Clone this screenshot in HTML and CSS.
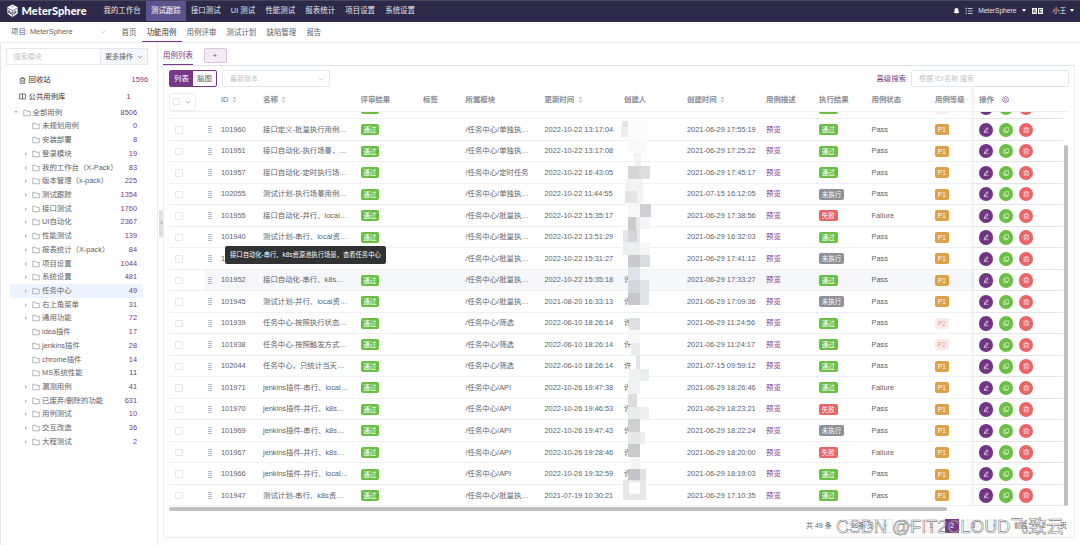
FILE: index.html
```
<!DOCTYPE html>
<html>
<head>
	<meta charset="utf-8">
	<title>MeterSphere</title>
	<link rel="stylesheet" href="styles.css">
</head>
<body>
	<svg class="sprite">
		<symbol id="i-folder" viewBox="0 0 16 16"><path d="M1.5 13.5v-11h5l1.5 2h6.500v9z" fill="none" stroke="currentColor" stroke-width="1.3"/></symbol>
		<symbol id="i-down" viewBox="0 0 16 16"><path d="M2 5l6 6 6-6" fill="none" stroke="currentColor" stroke-width="1.7"/></symbol>
		<symbol id="i-sort" viewBox="0 0 10 16"><path d="M5 1l4.500 5h-9zM5 15l4.500-5h-9z" fill="currentColor"/></symbol>
		<symbol id="i-edit" viewBox="0 0 16 16"><path d="M4 9.500l5.500-7.500 3 2.200-5.500 7.500-3.400 1zM2 14.500h12" fill="none" stroke="currentColor" stroke-width="1.6"/></symbol>
		<symbol id="i-copy" viewBox="0 0 16 16"><path d="M5 2h9v9h-9zM5 5h-3v9h9v-3" fill="none" stroke="currentColor" stroke-width="1.3"/></symbol>
		<symbol id="i-trash" viewBox="0 0 16 16"><path d="M1.500 4h13M5.500 4v-2.500h5v2.500M3 4v10.500h10v-10.500M6.500 7v5M9.500 7v5" fill="none" stroke="currentColor" stroke-width="1.4"/></symbol>
		<symbol id="i-book" viewBox="0 0 16 16"><path d="M8 3v10.500M1 2.500h14v11h-14z" fill="none" stroke="currentColor" stroke-width="1.5"/></symbol>
		<symbol id="i-gear" viewBox="0 0 16 16"><path d="M8 1l2 1.800 2.800-.3.700 2.700 2 2-1.500 2.300.2 2.700-2.700.8-1.500 2.300-2-1.300-2 1.300-1.500-2.300-2.700-.8.2-2.700-1.500-2.300 2-2 .7-2.700 2.800.3z" fill="none" stroke="currentColor" stroke-width="1.4"/><circle cx="8" cy="8.300" r="2.600" fill="none" stroke="currentColor" stroke-width="1.400"/></symbol>
	</svg>

	<header class="top">
		<div class="logo">
			<svg viewBox="0 0 28 30"><path d="M14 1l11 5.500v14l-11 8-11-8v-14z" fill="#fff"/><path d="M4 9l10 5 10-5M14 14v14" fill="none" stroke="#2d2a49" stroke-width="1.300"/><path d="M6 20v-6l5 8v-5M17 22v-4l4-3v4l-4 3" fill="none" stroke="#2d2a49" stroke-width="1.800"/><path d="M11 5l3-2 4 3-4 2z" fill="#b9b7c9"/></svg>
			<span>MeterSphere</span>
		</div>
		<nav class="menu">
			<a>我的工作台</a><a class="on">测试跟踪</a><a>接口测试</a><a>UI 测试</a><a>性能测试</a><a>报表统计</a><a>项目设置</a><a>系统设置</a>
		</nav>
		<div class="user">
			<svg class="bell" viewBox="0 0 16 16"><path d="M8 1c-3 0-4.500 2-4.500 5v3.500l-2.500 3h14l-2.500-3v-3.500c0-3-1.500-5-4.500-5zM6 13.500h4l-2 2z" fill="#fff"/></svg>
			<svg class="tasks" viewBox="0 0 16 16"><path d="M6 3h9M6 8h9M6 13h9M1 3l1.500 1.500 2-3M1 8h3M1 13h3" fill="none" stroke="#fff" stroke-width="1.400"/></svg>
			<span>MeterSphere</span><i class="caret"></i>
			<span class="lang"><b>A</b><b>E</b></span>
			<span>小王</span><i class="caret last"></i>
		</div>
	</header>

	<div class="sub">
		<div class="project"><span>项目: MeterSphere</span><svg><use href="#i-down"/></svg></div>
		<nav class="tabs">
			<a>首页</a><a class="on">功能用例</a><a>用例评审</a><a>测试计划</a><a>缺陷管理</a><a>报告</a>
		</nav>
	</div>

	<div class="main">
		<aside class="side">
			<div class="search"><span>搜索模块</span><b>更多操作<svg><use href="#i-down"/></svg></b></div>
			<div class="entry"><svg><use href="#i-trash"/></svg><span>回收站</span><em>1596</em></div>
			<div class="entry pub"><svg><use href="#i-book"/></svg><span>公共用例库</span><em>1</em></div>
			<div class="tree" id="tree"></div>
			<div class="fold">‹</div>
		</aside>

		<section class="content">
			<div class="views"><span class="view">用例列表</span><span class="add">+</span></div>
			<div class="card">
				<div class="tools">
					<div class="mode"><b>列表</b><span>脑图</span></div>
					<div class="version"><span>最新版本</span><svg><use href="#i-down"/></svg></div>
					<a class="adv">高级搜索</a>
					<div class="query">根据 ID/名称 搜索</div>
				</div>
				<div class="table">
					<div class="row head">
						<div><span class="all"><i class="box"></i><svg><use href="#i-down"/></svg></span></div>
						<div></div>
						<div>ID<svg class="sort"><use href="#i-sort"/></svg></div>
						<div>名称<svg class="sort"><use href="#i-sort"/></svg></div>
						<div>评审结果</div>
						<div>标签</div>
						<div>所属模块</div>
						<div>更新时间<svg class="sort"><use href="#i-sort"/></svg></div>
						<div>创建人</div>
						<div>创建时间<svg class="sort"><use href="#i-sort"/></svg></div>
						<div>用例描述</div>
						<div>执行结果</div>
						<div>用例状态<svg class="filter"><use href="#i-down"/></svg></div>
						<div>用例等级<svg class="filter"><use href="#i-down"/></svg></div>
						<div class="ops">操作<svg class="gear"><use href="#i-gear"/></svg></div>
					</div>
					<div class="body" id="rows"></div>
					<div class="vbar"></div>
					<svg class="mosaic" id="mosaic" viewBox="0 0 40 390"></svg>
					<div class="tip">接口自动化-串行、k8s资源池执行场景，查看任务中心</div>
				</div>
				<div class="hbar"></div>
				<div class="pager">
					<span class="total">共 49 条</span>
					<span class="size">20条/页<svg><use href="#i-down"/></svg></span>
					<span class="pg">‹</span><span class="pg">1</span><span class="pg cur">2</span><span class="pg">3</span><span class="pg">›</span>
					<span class="jump">前往</span><span class="num">2</span><span>页</span>
				</div>
				<div class="mark">CSDN @FIT2CLOUD飞致云</div>
			</div>
		</section>
	</div>
	<script src="app.js"></script>
</body>
</html>
```
FILE: styles.css
```
* {
	box-sizing: border-box;
}
body {
	margin: 0;
	width: 1080px;
	height: 545px;
	overflow: hidden;
	background: #fff;
	color: #606266;
	font-family: "Liberation Sans", "Noto Sans CJK SC", sans-serif;
	font-size: 7.4px;
	line-height: 12px;
	white-space: nowrap;
}
svg {
	width: 8px;
	height: 8px;
	flex: none;
}
i, em {
	font-style: normal;
}
.sprite {
	display: none;
}

/* header */
.top {
	display: flex;
	align-items: center;
	height: 21.500px;
	padding-bottom: 1px;
	background: #2d2a49;
	border-top: 1px solid #47455c;
	color: #e6e6ec;
}
.logo {
	display: flex;
	align-items: center;
	width: 98.500px;
	padding-left: 6px;
	color: #fff;
	font: 900 11px/18px Lato, sans-serif;
	letter-spacing: .05px;
}
.logo svg {
	width: 13px;
	height: 14px;
	margin-right: 2.500px;
}
.menu {
	display: flex;
	flex: 1;
	font-size: 7.450px;
}
.menu a {
	padding: 0 5.100px;
	line-height: 20px;
}
.menu .on {
	background: #5b5390;
	color: #fff;
}
.user {
	display: flex;
	align-items: center;
	padding-right: 6px;
	font-size: 6.600px;
}
.bell {
	width: 7px;
	height: 8px;
	margin-right: 5px;
}
.tasks {
	margin-right: 5px;
}
.caret {
	border: 2px solid transparent;
	border-top: 3px solid #fff;
	border-bottom: 0;
	margin: 0 6px 0 5.500px;
}
.caret.last {
	margin: 0 0 0 4px;
}
.lang {
	display: flex;
	gap: 1px;
	margin-right: 10px;
}
.lang b {
	width: 5px;
	height: 6px;
	background: #fff;
	color: #2d2a49;
	font-size: 5px;
	line-height: 6px;
	text-align: center;
}

/* second bar */
.sub {
	display: flex;
	height: 21.300px;
	border-bottom: 1px solid #ebedf0;
}
.project {
	display: flex;
	align-items: center;
	justify-content: space-between;
	width: 116.500px;
	padding: 0 11px 0 11px;
}
.project svg, .version svg {
	width: 6px;
	height: 6px;
	color: #b4b8c0;
}
.tabs {
	display: flex;
}
.tabs a {
	padding: 0 5.100px;
	line-height: 21px;
	font-size: 7.450px;
}
.tabs .on {
	border-bottom: 1px solid #783887;
	color: #303133;
}

.main {
	display: flex;
	height: 502px;
}

/* module tree */
.side {
	position: relative;
	width: 158px;
	padding: 5.500px 9px 0 5px;
	border-left: 1px solid #e6e6e6;
	border-right: 1px solid #ececec;
}
.search {
	display: flex;
	height: 16.500px;
	width: 142px;
	margin-bottom: 7px;
	border: 1px solid #e4e7ed;
	line-height: 15px;
	color: #c0c4cc;
	font-size: 7px;
}
.search span {
	flex: 1;
	padding-left: 6.500px;
}
.search b {
	display: flex;
	align-items: center;
	justify-content: space-between;
	width: 47px;
	padding: 0 4px;
	background: #f5f7fa;
	border-left: 1px solid #e4e7ed;
	color: #606266;
	font-weight: normal;
}
.search b svg {
	width: 6px;
	height: 6px;
}
.entry {
	display: flex;
	align-items: center;
	height: 16.500px;
	padding: 0 0 0 13px;
	color: #303133;
}
.entry svg {
	width: 7px;
	height: 7px;
	margin-right: 2.500px;
}
.entry span {
	flex: 1;
}
.entry em {
	width: 30px;
	text-align: right;
	color: #783887;
}
.pub em {
	margin-right: 17.500px;
}
.tree {
	padding-top: 1px;
}
.node {
	display: flex;
	align-items: center;
	height: 13.730px;
	margin-left: 4px;
	width: 133px;
	padding-right: 6px;
}
.node .arr {
	width: 22px;
	padding-left: 14.500px;
}
.node .arr::before {
	content: "";
	display: none;
	width: 0;
	border: 2px solid transparent;
	border-left: 2.500px solid #b4b8c0;
	border-right: 0;
}
.node.has .arr::before {
	display: block;
}
.node svg {
	width: 8px;
	height: 8px;
	margin-right: 2px;
	color: #8b8e95;
}
.node span {
	flex: 1;
}
.node em {
	color: #783887;
}
.node.sel {
	background: #ecf5ff;
}
.node.root .arr {
	width: 12.500px;
	padding-left: 4px;
}
.node.root .arr::before {
	transform: rotate(90deg);
	width: 2px;
}
.fold {
	position: absolute;
	left: 158px;
	top: 167px;
	width: 5px;
	height: 27px;
	border-radius: 0 3px 3px 0;
	background: #dfe1e6;
	color: #909399;
	line-height: 25px;
	text-align: center;
}

/* case list */
.content {
	flex: 1;
	padding: 5px 5px 0 5px;
}
.views {
	display: flex;
	height: 17.500px;
	line-height: 15px;
}
.view {
	border-bottom: 1px solid #783887;
	color: #783887;
	font-size: 7.500px;
}
.add {
	width: 23px;
	height: 15px;
	margin-left: 10.500px;
	border: 1px solid #d9c6de;
	border-radius: 2px;
	background: #f2ebf4;
	color: #783887;
	line-height: 13px;
	text-align: center;
}
.card {
	position: relative;
	height: 472.500px;
	padding: 4px 5px 0 5px;
	border: 1px solid #ebeef5;
	border-top-color: #dfe2e8;
}
.tools {
	display: flex;
	align-items: center;
	height: 17px;
}
.mode {
	display: flex;
	width: 48px;
	height: 17px;
	border: 1px solid #783887;
	border-radius: 2px;
	line-height: 15px;
	text-align: center;
}
.mode b {
	flex: 1;
	background: #783887;
	color: #fff;
	font-weight: normal;
}
.mode span {
	flex: 1;
}
.version {
	display: flex;
	align-items: center;
	justify-content: space-between;
	width: 108px;
	height: 17px;
	margin-left: 5px;
	padding: 0 5px 0 7px;
	border: 1px solid #e4e7ed;
	border-radius: 2px;
	color: #c0c4cc;
	font-size: 7px;
}
.adv {
	margin-left: auto;
	color: #783887;
}
.query {
	width: 158px;
	height: 17px;
	margin-left: 5px;
	padding-left: 7px;
	border: 1px solid #e4e7ed;
	border-radius: 2px;
	color: #c0c4cc;
	font-size: 7px;
	line-height: 15px;
}
.table {
	position: relative;
	height: 419px;
	width: 900px;
}
.row {
	display: grid;
	grid-template-columns: 39px 13px 42px 97.500px 62.500px 42.500px 79px 79.500px 63px 79px 53px 52.500px 63.500px 39px 90px;
	height: 21.530px;
	width: 895px;
	border-bottom: 1px solid #eff1f5;
	align-items: center;
}
.row > div {
	display: flex;
	align-items: center;
	height: 100%;
	padding-top: 1px;
}
.head {
	height: 24.500px;
	width: 900px;
	color: #85888f;
	font-weight: 500;
	-webkit-text-stroke: .15px #85888f;
}
.all {
	display: flex;
	align-items: center;
	justify-content: space-between;
	width: 27px;
	height: 18px;
	margin-top: 4px;
	padding: 0 4px 0 2.500px;
	border: 1px solid #ebeef5;
	border-radius: 3px;
}
.all svg {
	width: 6px;
	height: 6px;
}
.box {
	width: 7.500px;
	height: 7.500px;
	border: 1px solid #e4e7ed;
	border-radius: 1px;
}
.row:not(.head) .box {
	margin-left: 6px;
}
.sort {
	width: 5px;
	height: 7px;
	margin-left: 3.500px;
	color: #b9bdc6;
}
.filter {
	width: 4px;
	height: 4px;
	color: #a5a8af;
}
.gear {
	width: 7px;
	height: 7px;
	margin-left: 8px;
	color: #783887;
}
.body {
	display: flex;
	flex-direction: column;
	justify-content: flex-end;
	height: 394.500px;
	overflow: hidden;
}
.body .row {
	flex: none;
}
.grip {
	width: 4px;
	height: 7px;
	background: repeating-linear-gradient(#b5b8be 0 1px, transparent 1px 2px);
}
.tag {
	height: 11px;
	padding: 0 2.800px;
	border-radius: 2px;
	color: #fff;
	font-size: 6.500px;
	line-height: 11px;
}
.ok { background: #6bbf44; }
.bad { background: #ea6567; }
.none { background: #8d9096; }
.p1 { background: #dfa04a; }
.p2 {
	background: #fdeaea;
	color: #ef9a9a;
}
.link {
	color: #783887;
}
.row .ops {
	gap: 5.700px;
	padding-left: 5px;
	background: #fff;
	box-shadow: -2px 0 3px rgba(0, 0, 0, .07);
}
.head .ops {
	gap: 0;
}
.btn {
	display: flex;
	align-items: center;
	justify-content: center;
	width: 14.300px;
	height: 14.300px;
	border-radius: 50%;
	color: #fff;
}
.btn svg {
	width: 6.500px;
	height: 6.500px;
}
.edit { background: #713583; }
.copy { background: #6bbf44; }
.del { background: #ea6567; }
.row.hover {
	background: linear-gradient(90deg, #fff 36px, #f5f7fa 36px);
}
.vbar {
	position: absolute;
	right: 1px;
	top: 58px;
	width: 4px;
	height: 361px;
	border-radius: 2px;
	background: #c0c0c0;
}
.hbar {
	width: 778px;
	height: 4px;
	border-radius: 2px;
	margin-top: .5px;
	background: #c1c1c3;
}
.mosaic {
	position: absolute;
	left: 451px;
	top: 30px;
	width: 40px;
	height: 390px;
}
.tip {
	position: absolute;
	left: 56px;
	top: 158.500px;
	height: 18px;
	padding: 0 5px;
	border-radius: 2px;
	background: #303133;
	color: #fff;
	font-size: 6.320px;
	line-height: 18px;
}

/* pagination */
.pager {
	display: flex;
	align-items: center;
	gap: 7px;
	height: 14px;
	margin-top: 8px;
	padding: 0 2px 0 637px;
	font-size: 7px;
}
.size {
	display: flex;
	align-items: center;
	justify-content: space-between;
	width: 47px;
	margin-left: 7.500px;
	margin-right: 3px;
	padding: 0 4px;
	border: 1px solid #e8eaee;
	font-size: 6.500px;
}
.size svg {
	width: 5px;
	height: 5px;
}
.pg {
	width: 14px;
	height: 14px;
	background: #f4f4f5;
	line-height: 14px;
	text-align: center;
}
.cur {
	background: #783887;
	color: #fff;
}
.jump {
	margin-left: auto;
}
.num {
	width: 18px;
	border: 1px solid #e8eaee;
	text-align: center;
}
.mark {
	position: absolute;
	left: 672px;
	top: 448px;
	color: rgba(255, 255, 255, .4);
	font-size: 18px;
	line-height: 26px;
	-webkit-text-stroke: .6px rgba(105, 105, 110, .85);
}
```
FILE: app.js
```
// name, count, has children
var nodes = [
	['未规划用例', 0, 0], ['安装部署', 8, 0], ['登录模块', 19, 1], ['我的工作台（X-Pack）', 83, 1],
	['版本管理（x-pack）', 225, 1], ['测试跟踪', 1354, 1], ['接口测试', 1760, 1], ['UI自动化', 2367, 1],
	['性能测试', 139, 1], ['报表统计（X-pack）', 84, 1], ['项目设置', 1044, 1], ['系统设置', 481, 1],
	['任务中心', 49, 1], ['右上角菜单', 31, 1], ['通用功能', 72, 1], ['idea插件', 17, 0],
	['jenkins插件', 28, 0], ['chrome插件', 14, 0], ['MS系统性能', 11, 0], ['漏测用例', 41, 1],
	['已废弃/删除的功能', 631, 1], ['用例测试', 10, 1], ['交互改造', 36, 1], ['大程测试', 2, 1]
];

function node(cls, name, count) {
	return '<div class="node ' + cls + '"><i class="arr"></i><svg><use href="#i-folder"/></svg><span>' + name + '</span><em>' + count + '</em></div>';
}

var html = node('root has', '全部用例', 8506);
nodes.forEach(function (n) {
	html += node((n[2] ? 'has' : '') + (n[0] == '任务中心' ? ' sel' : ''), n[0], n[1]);
});
document.getElementById('tree').innerHTML = html;

// id, name, module, updated, creator, created, result, status, level
var cases = [
	['', '', '', '', '', '', 'ok', '', 'P2'],
	['101960', '接口定义-批量执行用例…', '单独执…', '2022-10-22 13:17:04', '', '2021-06-29 17:55:19', 'ok', 'Pass', 'P1'],
	['101951', '接口自动化-执行场景，…', '单独执…', '2022-10-22 13:17:08', '', '2021-06-29 17:25:22', 'ok', 'Pass', 'P1'],
	['101957', '接口自动化-定时执行场…', '定时任务', '2022-10-22 16:43:05', '', '2021-06-29 17:45:17', 'ok', 'Pass', 'P1'],
	['102055', '测试计划-执行场景用例…', '单独执…', '2022-10-22 11:44:55', '', '2021-07-15 16:12:05', 'none', 'Pass', 'P1'],
	['101955', '接口自动化-并行、local…', '批量执…', '2022-10-22 15:35:17', '', '2021-06-29 17:38:56', 'bad', 'Failure', 'P1'],
	['101940', '测试计划-串行、local资…', '批量执…', '2022-10-22 13:51:29', '', '2021-06-29 16:32:03', 'ok', 'Pass', 'P1'],
	['101953', '接口自动化-并行、k8s…', '批量执…', '2022-10-22 15:31:27', '', '2021-06-29 17:41:12', 'none', 'Pass', 'P1'],
	['101952', '接口自动化-串行、k8s…', '批量执…', '2022-10-22 15:35:18', '许', '2021-06-29 17:33:27', 'ok', 'Pass', 'P1'],
	['101945', '测试计划-并行、local资…', '批量执…', '2021-08-20 16:33:13', '许', '2021-06-29 17:09:36', 'none', 'Pass', 'P1'],
	['101939', '任务中心-按照执行状态…', '筛选', '2022-06-10 18:26:14', '许', '2021-06-29 11:24:56', 'ok', 'Pass', 'P2'],
	['101938', '任务中心-按照触发方式…', '筛选', '2022-06-10 18:26:14', '许', '2021-06-29 11:24:17', 'ok', 'Pass', 'P2'],
	['102044', '任务中心，只统计当天…', '筛选', '2022-06-10 18:26:14', '许', '2021-07-15 09:59:12', 'ok', 'Pass', 'P1'],
	['101971', 'jenkins插件-串行、local…', 'API', '2022-10-26 19:47:38', '许', '2021-06-29 18:26:46', 'ok', 'Failure', 'P1'],
	['101970', 'jenkins插件-并行、k8s…', 'API', '2022-10-26 19:46:53', '许', '2021-06-29 18:23:21', 'bad', 'Pass', 'P1'],
	['101969', 'jenkins插件-串行、k8s…', 'API', '2022-10-26 19:47:43', '许', '2021-06-29 18:22:24', 'none', 'Pass', 'P1'],
	['101967', 'jenkins插件-并行、k8s…', 'API', '2022-10-26 19:28:46', '许', '2021-06-29 18:20:00', 'bad', 'Failure', 'P1'],
	['101966', 'jenkins插件-并行、local…', 'API', '2022-10-26 19:32:59', '许', '2021-06-29 18:19:03', 'ok', 'Pass', 'P1'],
	['101947', '测试计划-串行、k8s资…', '批量执…', '2021-07-19 10:30:21', '', '2021-06-29 17:10:35', 'ok', 'Pass', 'P1']
];
var results = { ok: '通过', bad: '失败', none: '未执行' };

function btn(cls, icon) {
	return '<span class="btn ' + cls + '"><svg><use href="#i-' + icon + '"/></svg></span>';
}

document.getElementById('rows').innerHTML = cases.map(function (c) {
	var cells = [
		'<i class="box"></i>', '<i class="grip"></i>', c[0], c[1],
		'<span class="tag ok">通过</span>', '', c[2] ? '/任务中心/' + c[2] : '', c[3], c[4], c[5],
		c[0] ? '<span class="link">预览</span>' : '',
		'<span class="tag ' + c[6] + '">' + results[c[6]] + '</span>', c[7],
		'<span class="tag ' + c[8].toLowerCase() + '">' + c[8] + '</span>'
	];
	return '<div class="row' + (c[0] == '101952' ? ' hover' : '') + '"><div>' + cells.join('</div><div>') + '</div>' +
		'<div class="ops">' + btn('edit', 'edit') + btn('copy', 'copy') + btn('del', 'trash') + '</div></div>';
}).join('');

// blocks hiding the creator names: x, y, w, h, colour
var blocks = [
	[2, 3, 26, 20, '#fdfcfd'], [2, 4, 6, 8, '#e4e3e5'], [1, 10, 7, 10, '#efedef'], [8, 23, 19, 13, '#f9f9fb'],
	[14, 36, 7, 20, '#f2f2f4'], [8, 49, 11, 13, '#d6d6d8'], [19, 49, 11, 13, '#dddddf'],
	[5, 62, 18, 24, '#f3f3f5'], [5, 74, 12, 12, '#e5e5e7'], [8, 86, 13, 14, '#f8f8f9'],
	[20, 87, 11, 13, '#cfcfd3'], [20, 100, 10, 12, '#f3f3f8'], [8, 100, 8, 13, '#cbcacd'],
	[16, 100, 4, 36, '#e9e9eb'], [3, 113, 5, 12, '#e4e5e7'], [8, 113, 9, 12, '#d5d5d8'],
	[3, 125, 18, 13, '#eceef0'], [20, 126, 10, 12, '#f6f6f7'], [8, 138, 12, 12, '#c8cacd'], [20, 138, 10, 12, '#d9dbde'],
	[8, 150, 12, 13, '#e0e3e8'], [8, 163, 12, 13, '#d3d6da'], [20, 163, 9, 25, '#e2e4e8'], [8, 176, 12, 12, '#c6c7ca'],
	[9, 201, 11, 12, '#dfe0e2'], [8, 213, 12, 13, '#f8f8f9'], [11, 226, 9, 12, '#eaebed'], [16, 238, 4, 14, '#e2e3e5'],
	[9, 252, 11, 12, '#eff0f2'], [20, 252, 9, 12, '#ebecee'], [8, 264, 12, 13, '#f1f1f3'],
	[8, 277, 9, 13, '#dcdcde'], [8, 290, 12, 12, '#eaebec'], [20, 290, 9, 12, '#eeeef1'], [8, 302, 12, 13, '#cfd0d2'],
	[8, 315, 12, 12, '#e7e8ea'], [20, 315, 5, 12, '#eeeef0'], [8, 327, 12, 13, '#c9cbce'], [11, 340, 9, 12, '#f4f4f7'],
	[8, 352, 12, 13, '#c4c5c8'], [20, 352, 6, 24, '#e2e2e4'], [3, 363, 23, 20, '#e7e7e9'], [9, 365, 11, 12, '#fcfcfd']
];
document.getElementById('mosaic').innerHTML = blocks.map(function (b) {
	return '<rect x="' + b[0] + '" y="' + b[1] + '" width="' + b[2] + '" height="' + b[3] + '" fill="' + b[4] + '"/>';
}).join('');
```
